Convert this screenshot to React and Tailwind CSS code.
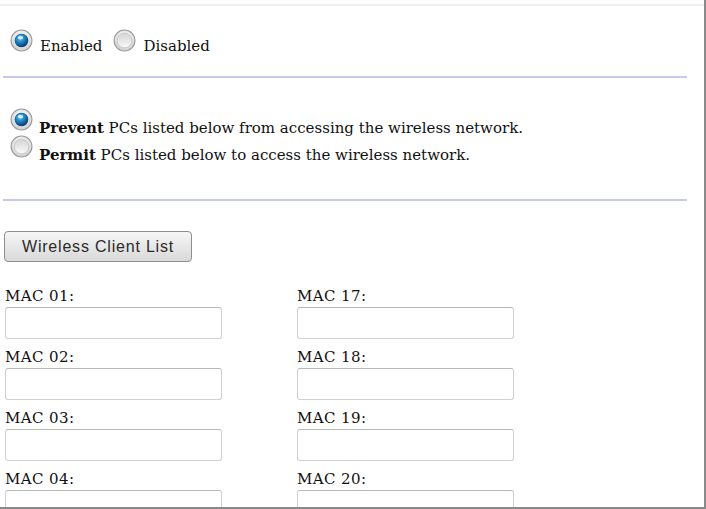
import React from "react";

function Radio({ checked }) {
  return (
    <svg width="23" height="23" viewBox="0 0 22 22" className="shrink-0">
      <defs>
        <radialGradient id="ring" cx="50%" cy="35%" r="65%">
          <stop offset="0%" stopColor="#ffffff" />
          <stop offset="100%" stopColor="#cfcfcf" />
        </radialGradient>
        <radialGradient id="ball" cx="40%" cy="30%" r="70%">
          <stop offset="0%" stopColor="#bfe6ff" />
          <stop offset="35%" stopColor="#2a9ad8" />
          <stop offset="100%" stopColor="#0b3f78" />
        </radialGradient>
        <linearGradient id="inner" x1="0" y1="0" x2="0" y2="1">
          <stop offset="0%" stopColor="#d4d4d4" />
          <stop offset="100%" stopColor="#fafafa" />
        </linearGradient>
      </defs>
      <circle cx="11" cy="11" r="10" fill="url(#ring)" stroke="#9a9a9a" strokeWidth="1" />
      {checked ? (
        <>
          <circle cx="11" cy="11" r="6.5" fill="#1c4f7d" />
          <circle cx="11" cy="11" r="6" fill="url(#ball)" />
          <ellipse cx="10" cy="8.2" rx="2.6" ry="1.6" fill="#e8f6ff" opacity="0.85" />
        </>
      ) : (
        <circle cx="11" cy="11" r="7" fill="url(#inner)" stroke="#c4c4c4" strokeWidth="0.8" />
      )}
    </svg>
  );
}

function MacField({ n }) {
  const label = "MAC " + String(n).padStart(2, "0") + ":";
  return (
    <div className="flex flex-col">
      <div className="h-[21px] leading-[20px] text-[15px] tracking-[0.4px] text-[#111]">{label}</div>
      <div className="w-[217px] h-[32px] rounded-[3px] border border-[#d0d0d0] border-t-[#b8b8b8] bg-white" />
    </div>
  );
}

export default function App() {
  const left = [1, 2, 3, 4];
  const right = [17, 18, 19, 20];
  return (
    <div
      className="w-[706px] h-[509px] bg-white overflow-hidden border-r-2 border-b-2 border-[#8a8a8a] text-[#111]"
      style={{ fontFamily: '"DejaVu Serif", "Liberation Serif", serif' }}
    >
      <div className="mt-[4px] h-[2px] bg-[#f0f0f0]" />
      <div className="mt-[23px] pl-[10px] flex items-start">
        <Radio checked />
        <span className="ml-[7px] mt-[8px] text-[15px] leading-[18px]">Enabled</span>
        <span className="ml-[11px]">
          <Radio />
        </span>
        <span className="ml-[7px] mt-[8px] text-[15px] leading-[18px]">Disabled</span>
      </div>
      <div className="mt-[21px] ml-[3px] w-[684px] h-[2px] bg-[#c8c8e8]" />
      <div className="mt-[30px] pl-[10px] flex flex-col">
        <div className="flex items-start h-[27px]">
          <Radio checked />
          <span className="ml-[6px] mt-[11px] text-[15px] leading-[18px]">
            <b>Prevent</b> PCs listed below from accessing the wireless network.
          </span>
        </div>
        <div className="flex items-start h-[27px]">
          <Radio />
          <span className="ml-[6px] mt-[11px] text-[15px] leading-[18px]">
            <b>Permit</b> PCs listed below to access the wireless network.
          </span>
        </div>
      </div>
      <div className="mt-[37px] ml-[3px] w-[684px] h-[2px] bg-[#c8c8e8]" />
      <div className="mt-[30px] ml-[4px]">
        <button
          className="w-[188px] h-[31px] rounded-[4px] border border-[#8e8e8e] bg-gradient-to-b from-[#f6f6f6] to-[#d9d9d9] text-[16px] text-[#2a2a2a] tracking-[0.8px]"
          style={{ fontFamily: '"Liberation Sans", Arial, sans-serif' }}
        >
          Wireless Client List
        </button>
      </div>
      <div className="mt-[24px] ml-[5px] grid grid-cols-[292px_217px] gap-y-[8px]">
        {left.map((n, i) => (
          <React.Fragment key={n}>
            <MacField n={n} />
            <MacField n={right[i]} />
          </React.Fragment>
        ))}
      </div>
    </div>
  );
}
